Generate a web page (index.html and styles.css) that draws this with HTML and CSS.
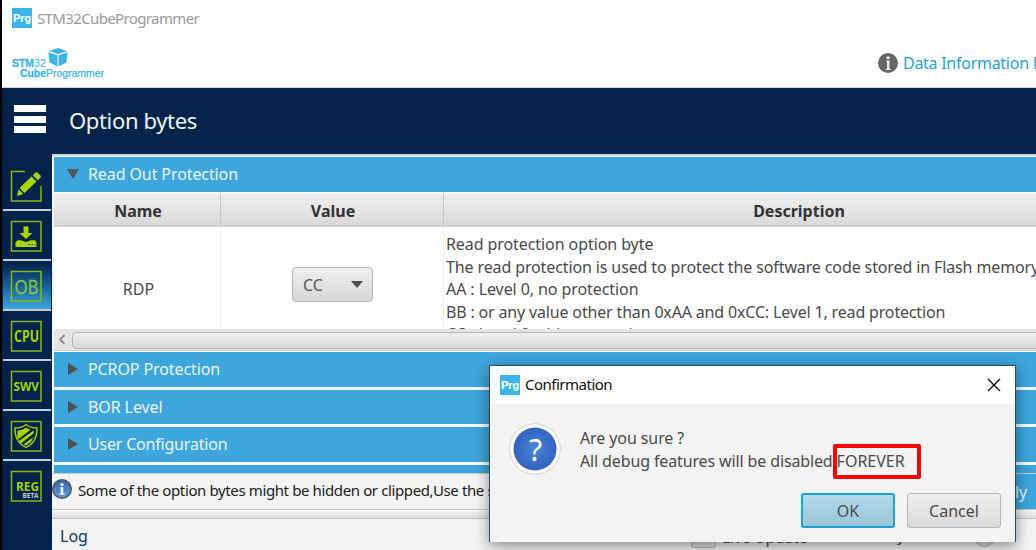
FILE: index.html
```html
<!DOCTYPE html>
<html lang="en">
<head>
<meta charset="utf-8">
<title>STM32CubeProgrammer</title>
<link rel="stylesheet" href="styles.css">
</head>
<body>
<div class="desktop">
  <div class="window">
    <div class="titlebar"><span class="prg"><b>Prg</b></span><span class="app-title">STM32CubeProgrammer</span></div>
    <div class="brandbar">
      <svg class="logo" width="96" height="34" viewBox="0 0 96 34">
        <path d="M37 3 46 0 55 3 46 6zM36.500 4.300 45.500 7.300V18.500L37.500 14.500zM46.500 7.300 55.500 4.300 54.500 14.500 46.500 18.500z" fill="#3cb4e7"/>
        <text x="0" y="19" class="logo-bold" textLength="22" lengthAdjust="spacingAndGlyphs">STM</text>
        <text x="22" y="19" class="logo-thin" textLength="12" lengthAdjust="spacingAndGlyphs">32</text>
        <text x="8" y="28.500" class="logo-bold" textLength="26" lengthAdjust="spacingAndGlyphs">Cube</text>
        <text x="34" y="28.500" class="logo-mid" textLength="58" lengthAdjust="spacingAndGlyphs">Programmer</text>
      </svg>
      <div class="info-link">
        <svg width="20" height="20" viewBox="0 0 20 20"><circle cx="10" cy="10" r="10" fill="#666"/><path d="M8.500 3.500h3v2.500h-3zM8 7.500h3.500V16H13v1H7.500v-1H9V8.500H8z" fill="#eee"/></svg>
        <span>Data Information Notice</span>
      </div>
    </div>
    <div class="header">
      <div class="burger"><i></i><i></i><i></i></div>
      <h1>Option bytes</h1>
    </div>
    <div class="main">
      <nav class="sidebar">
        <div class="item"><svg class="icon" viewBox="0 0 32 32"><path d="M15 1.500H1.500V31H31V16" class="ln"/><path d="M9.500 18 21.500 6.500 26.500 11.500 14.500 23zM22.800 5.200 25.500 2.500q1-1 2 0L30.500 5.500q1 1 0 2L27.800 10.200zM8.500 19.200 13.300 24 7 26z" class="fl"/></svg></div>
        <div class="item"><svg class="icon" viewBox="0 0 32 32"><path d="M1.500 1.500H31V31H1.500z" class="ln"/><path d="M13.500 6.500h5v6.500h4L16 19 9.500 13h4zM7.500 20.200h3.500l5 1.800 5-1.800h4l1.500 2.300V27H5.500v-4.500z" class="fl"/><path d="M18.500 24.500h1.500m1.500 0h1.500m1.500 0h1" stroke="#03234b"/></svg></div>
        <div class="item active"><svg class="icon" viewBox="0 0 32 32"><path d="M1.500 1.500H31V31H1.500z" class="ln"/><text x="4.500" y="24" class="ob" textLength="24" lengthAdjust="spacingAndGlyphs">OB</text></svg></div>
        <div class="item"><svg class="icon" viewBox="0 0 32 32"><path d="M1.500 1.500H31V31H1.500z" class="ln"/><text x="4" y="22" class="cpu" textLength="25" lengthAdjust="spacingAndGlyphs">CPU</text></svg></div>
        <div class="item"><svg class="icon" viewBox="0 0 32 32"><path d="M1.500 1.500H31V31H1.500z" class="ln"/><text x="3.500" y="20.500" class="swv" textLength="25.500" lengthAdjust="spacingAndGlyphs">SWV</text></svg></div>
        <div class="item"><svg class="icon" viewBox="0 0 32 32"><path d="M1.500 1.500H31V31H1.500z" class="ln"/><path d="M16 4.500Q20 8 27 8 27.500 22 16 27.500 4.500 22 5 8 12 8 16 4.500z" class="shield"/><path d="M16 7.500Q18 9 20.500 9.800L8 19.500Q7 15 7.500 10.500 12.500 10.500 16 7.500zM23.500 10.500 24 13 11 23.500 9 21zM23.500 17 21 22 16 25.500 13.500 24.500z" class="fl"/></svg></div>
        <div class="item"><svg class="icon" viewBox="0 0 32 32"><path d="M1.500 1.500H31V31H1.500z" class="ln"/><text x="6" y="20.500" class="reg" textLength="23" lengthAdjust="spacingAndGlyphs">REG</text><text x="12.500" y="27.500" class="beta" textLength="16" lengthAdjust="spacingAndGlyphs">BETA</text></svg></div>
      </nav>
      <section class="content">
        <div class="pane open"><i class="down"></i><span class="t1">Read Out Protection</span></div>
        <div class="thead"><div class="c1"><b>Name</b></div><div class="c2"><b>Value</b></div><div class="c3"><b>Description</b></div></div>
        <div class="tbody">
          <div class="c1"><span class="rdp">RDP</span></div>
          <div class="c2"><div class="combo"><span>CC</span><i></i></div></div>
          <div class="c3 desc">
            <p class="d1">Read protection option byte</p>
            <p class="d2">The read protection is used to protect the software code stored in Flash memory.</p>
            <p class="d3">AA : Level 0, no protection</p>
            <p class="d4">BB : or any value other than 0xAA and 0xCC: Level 1, read protection</p>
            <p class="d5">CC : Level 2, chip protection</p>
          </div>
        </div>
        <div class="hscroll"><svg width="20" height="20" viewBox="0 0 20 20"><path d="M10.500 6 6 10.500 10.500 15" fill="none" stroke="#8a8a8a" stroke-width="1.800"/></svg><div class="thumb"></div></div>
        <div class="pane"><i class="right"></i><span class="t2">PCROP Protection</span></div>
        <div class="pane"><i class="right"></i><span class="t3">BOR Level</span></div>
        <div class="pane"><i class="right"></i><span class="t4">User Configuration</span></div>
        <div class="pane last"></div>
        <div class="notice">
          <svg width="20" height="20" viewBox="0 0 20 20"><defs><linearGradient id="ib" x2="0" y2="1"><stop offset="0" stop-color="#3d62a0"/><stop offset="1" stop-color="#6c9bd6"/></linearGradient></defs><circle cx="10" cy="10" r="9.300" fill="url(#ib)" stroke="#44546c" stroke-width="1.400"/><circle cx="10" cy="5.500" r="1.600" fill="#fff"/><path d="M8 8.200h3.200v6.300h1.300v1.300H7.500v-1.300h1.300V9.500H8z" fill="#fff"/></svg>
          <span class="note">Some of the option bytes might be hidden or clipped,Use the s</span>
          <div class="apply">Apply</div>
        </div>
        <div class="splitter"></div>
        <div class="log"><span class="log-title">Log</span><i class="check"></i><span class="live">Live Update</span><span class="verb">Verbosity</span><i class="knob"></i></div>
      </section>
    </div>
  </div>
  <div class="dialog-clip">
    <div class="dialog">
      <div class="dlg-title"><span class="prg"><b>Prg</b></span><span class="confirm">Confirmation</span>
        <svg width="14" height="14" viewBox="0 0 14 14"><path d="M1 1 13 13M13 1 1 13" stroke="#000" stroke-width="1.200"/></svg></div>
      <div class="dlg-body">
        <div class="message">
          <svg width="52" height="52" viewBox="0 0 52 52"><defs><radialGradient id="q"><stop offset="0" stop-color="#4a86d8"/><stop offset="1" stop-color="#3263c0"/></radialGradient></defs><circle cx="26" cy="26" r="25.300" fill="#fff" stroke="#d3d3d3"/><circle cx="26" cy="26" r="21.500" fill="url(#q)"/><text x="26.500" y="37.500" class="qm">?</text></svg>
          <div class="msg-text"><p class="m1">Are you sure ?</p><p class="m2"><span>All debug features will be disabled</span> <span class="forever">FOREVER</span></p></div>
        </div>
        <div class="buttons"><button class="ok">OK</button><button>Cancel</button></div>
      </div>
    </div>
  </div>
  <div class="mark"></div>
</div>
</body>
</html>
```
FILE: styles.css
```css
* { box-sizing: border-box; margin: 0; padding: 0; }
body { font: 16px/22px "Noto Sans", "Open Sans", sans-serif; color: #4a4a4a; }
.desktop { position: relative; width: 1036px; height: 550px; overflow: hidden; background: #000; padding-left: 2px; }
.window { height: 550px; background: #fff; overflow: hidden; white-space: nowrap; }
.titlebar { height: 36px; display: flex; align-items: center; padding-left: 10px; gap: 5px; color: #999; font-size: 15px; }
.prg { width: 20px; height: 20px; background: #3cb4e7; color: #fff; display: flex; align-items: center; justify-content: center; font-family: Roboto, sans-serif; font-size: 11.500px; line-height: 20px; flex: none; }
.app-title { letter-spacing: -.63px; }
.brandbar { height: 52px; display: flex; padding-left: 10px; border-bottom: 1px solid #ccd4dc; }
.logo { margin-top: 12px; flex: none; font-family: "Liberation Sans", sans-serif; font-size: 10.500px; fill: #3cb4e7; }
.logo-bold { font-weight: bold; stroke: #3cb4e7; stroke-width: .3; }
.logo-mid { stroke: #3cb4e7; stroke-width: .25; }
.info-link { display: flex; flex: none; gap: 5px; margin: 17px 0 0 770px; color: #1fa0d3; height: 20px; align-items: center; letter-spacing: -.27px; }
.header { height: 66px; background: #03234b; display: flex; align-items: center; color: #f0f4f8; }
.burger { margin: 0 0 4px 12px; width: 32px; height: 28px; display: flex; flex-direction: column; justify-content: space-between; }
.burger i { height: 7px; background: #fff; }
h1 { font-weight: 400; font-size: 22px; margin: 0 0 2px 23px; letter-spacing: -.35px; }
.main { display: flex; height: 396px; }
.sidebar { width: 50px; background: #03234b; padding: 7px 1px 0; flex: none; }
.item { height: 50px; border-bottom: 2px solid #c5ccd5; display: flex; justify-content: center; padding: 8.500px 2.500px 0 0; }
.item:last-child { border: 0; }
.active { background: linear-gradient(#03234b 5%, #1b6da3 60%, #3ba7dc); }
.icon { width: 32px; height: 32px; flex: none; font-family: "Open Sans", sans-serif; fill: #a4d300; }
.ln { fill: none; stroke: #87b81b; stroke-width: 1.500; }
.fl { fill: #a8d500; }
.shield { fill: none; stroke: #a4d300; stroke-width: 1.300; }
.ob { font-size: 20.500px; fill: #86c440; stroke: #86c440; stroke-width: .3; }
.cpu { font-size: 15.500px; font-weight: bold; }
.swv { font-size: 12.500px; font-weight: bold; }
.reg { font-size: 13px; font-weight: bold; }
.beta { font-size: 6.500px; font-weight: bold; fill: #c3ccd8; }
.content { width: 984px; background: #f4f4f4; border-top: 2px solid #c8d8e2; overflow: hidden; }
.pane { height: 37.500px; border: 1px solid #f8fcff; border-width: 1px 0 2px 2px; background: #3da6dc; color: #eaf6fc; display: flex; align-items: center; padding-left: 14px; gap: 6px; letter-spacing: -.1px; }
.pane.open { padding-left: 13px; }
.pane.last { height: 9px; border-bottom: 0; }
.t4 { letter-spacing: -.2px; }
.down { border: 6.500px solid transparent; border-top: 10px solid #505558; border-bottom: 0; margin-right: 3px; }
.right { border: 6.500px solid transparent; border-left: 10px solid #505050; border-right: 0; margin-right: 4px; }
.thead { display: flex; height: 33px; background: linear-gradient(#efefef, #d9d9d9); border-bottom: 2px solid #cfcfcf; color: #333; margin-left: 2px; align-items: stretch; }
.thead div { display: flex; align-items: center; justify-content: center; border-right: 1px solid #c8c8c8; padding: 3px 0 0 2px; }
.c1 { width: 167px; flex: none; border-right: 1px solid #eee; }
.c2 { width: 223px; flex: none; border-right: 1px solid #eee; }
.c3 { width: 709px; flex: none; }
.tbody { display: flex; height: 102.500px; overflow: hidden; background: #fff; margin-left: 2px; }
.tbody .c1 { display: flex; justify-content: center; padding: 51px 0 0 3px; }
.tbody .c2 { padding: 40px 0 0 71px; }
.combo { width: 81px; height: 35px; border: 1px solid #b5b5b5; border-radius: 4px; background: linear-gradient(#eee, #d8d8d8); display: flex; align-items: center; justify-content: space-between; padding: 1px 9px 0 10px; color: #555; }
.combo i { border: 6px solid transparent; border-top: 7px solid #505050; border-bottom: 0; }
.desc { padding: 6.500px 0 0 2px; line-height: 22.500px; }
.d1, .d3 { letter-spacing: -.08px; }
.d2 { letter-spacing: -.12px; }
.d4 { letter-spacing: -.165px; }
.d5 { margin-top: .4px; }
.hscroll { height: 22px; background: #e4e4e4; border: solid #cfcfcf; border-width: 0 0 1px; display: flex; margin-left: 2px; }
.hscroll svg { margin-right: -2px; flex: none; }
.thumb { width: 990px; flex: none; height: 17px; margin-top: 3px; border: 1px solid #b8b8b8; border-radius: 4px; background: linear-gradient(#f0f0f0, #d8d8d8); }
.notice { height: 36.500px; border-top: 1px solid #c8c8c8; display: flex; align-items: center; gap: 6px; color: #1b1b1b; }
.note { font-size: 15px; width: 847px; flex: none; overflow: hidden; letter-spacing: -.38px; margin-top: -3px; }
.notice svg { flex: none; margin-top: -4px; }
.apply { height: 35.500px; width: 170px; flex: none; background: #3da6dc; color: #eaf6fc; padding: 7px 0 0 54px; }
.splitter { height: 10px; border: solid #c4c4c4; border-width: 1px 0; background: linear-gradient(#f8f8f8, #ddd); }
.log { height: 34px; display: flex; align-items: center; padding-left: 8px; }
.log > * { flex: none; }
.log-title { color: #0b3a66; width: 631px; }
.check { width: 25px; height: 20px; border: 1px solid #b3b3b3; border-radius: 3px; background: #ddd; margin-top: 3px; }
.live { margin: 2px 0 0 6px; width: 113px; letter-spacing: -.35px; }
.verb { width: 139px; margin-top: -2px; }
.knob { width: 21px; height: 21px; border: 1px solid #aaa; border-radius: 50%; background: #ddd; }
.dialog-clip { position: absolute; left: 470px; top: 345px; width: 566px; height: 205px; padding: 20px 20px 8px 19px; overflow: hidden; }
.dialog { width: 527px; height: 177px; border: 1px solid #294c63; border-bottom: 0; background: #f3f3f3; box-shadow: 0 4px 14px rgba(0,0,0,.45); }
.dlg-title { height: 38px; background: #fff; display: flex; align-items: center; padding: 0 14px 0 10px; gap: 5px; color: #111; font-size: 15px; }
.confirm { letter-spacing: -.5px; margin-top: -2px; }
.dlg-title svg { margin-left: auto; }
.dlg-body { height: 138px; padding: 19px 14px 14px 19px; display: flex; flex-direction: column; justify-content: space-between; }
.message { display: flex; gap: 19px; line-height: 22.500px; white-space: nowrap; }
.msg-text { padding-top: 4px; }
.m1 { letter-spacing: -.1px; }
.m2 { letter-spacing: -.13px; }
.forever { letter-spacing: 0; }
.qm { font-size: 30px; fill: #fff; text-anchor: middle; }
.buttons { display: flex; justify-content: flex-end; gap: 12px; }
button { width: 94px; height: 35px; font: inherit; color: #4a4a4a; border: 1px solid #b5b5b5; border-radius: 3px; background: linear-gradient(#efefef, #dadada); padding-top: 1px; }
.ok { border: 2px solid #1ba1d3; background: linear-gradient(#b1dbeb, #9bc6d9); }
.mark { position: absolute; left: 832.500px; top: 444px; width: 88px; height: 35px; border: 4px solid #fb0207; border-radius: 2px; }
```
